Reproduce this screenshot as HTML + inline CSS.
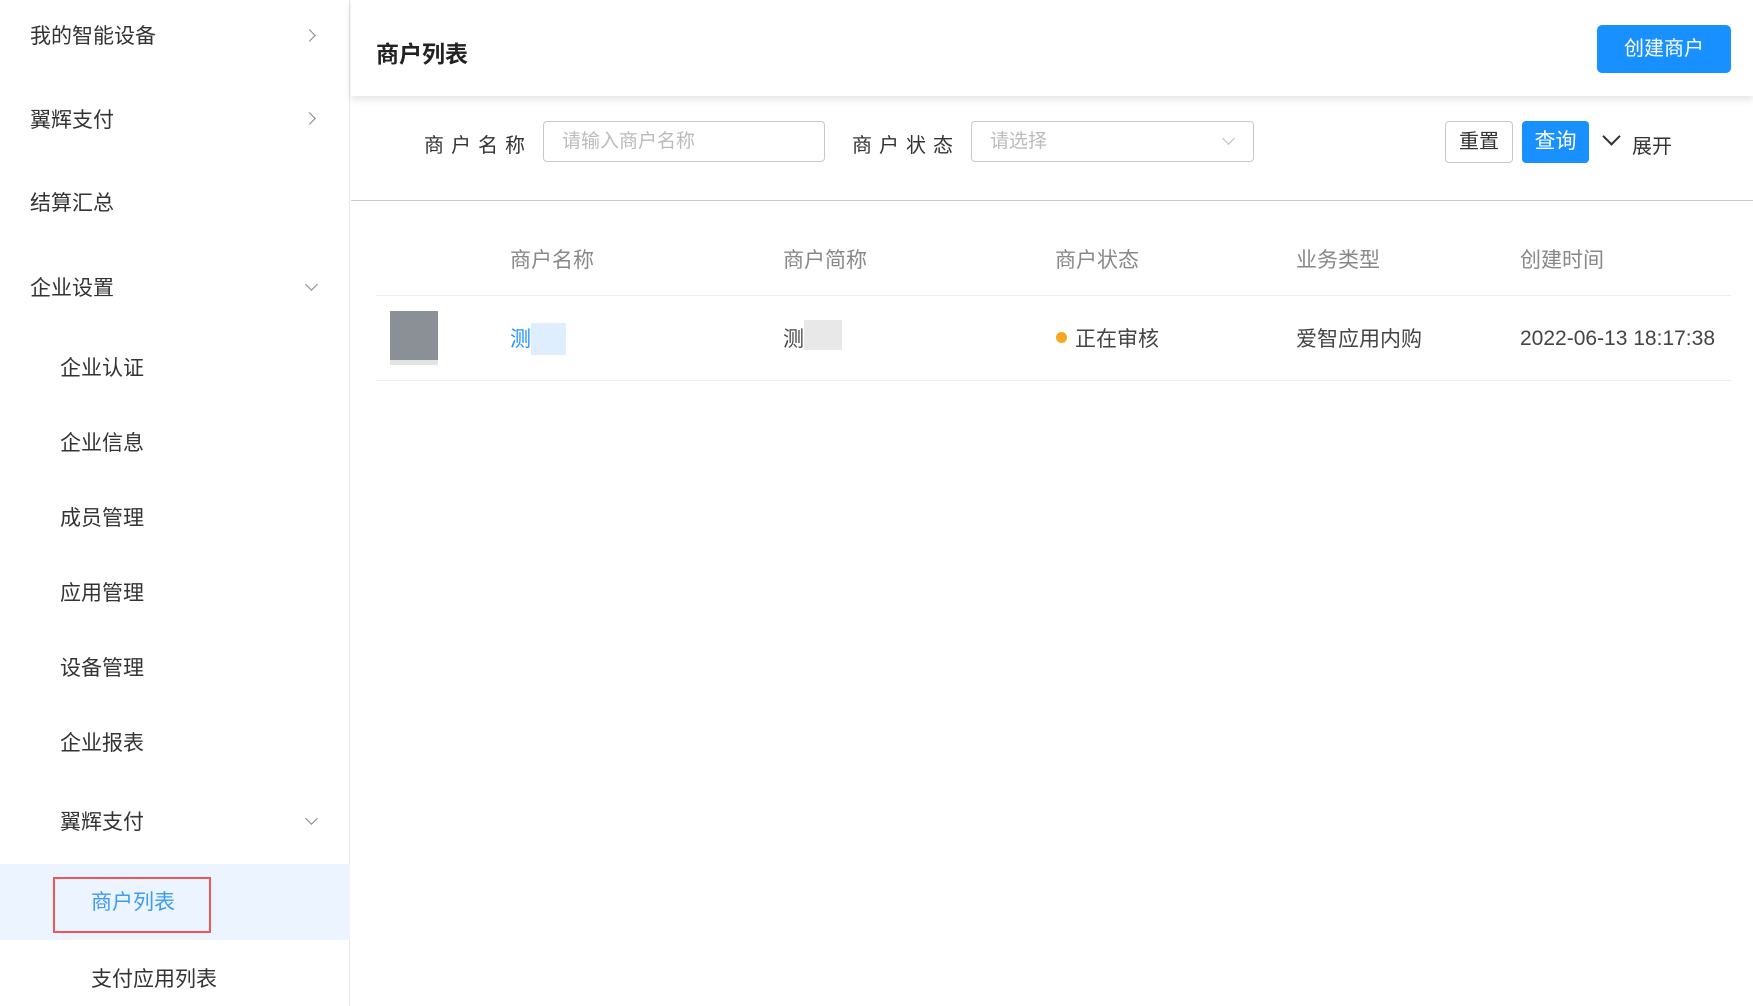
<!DOCTYPE html>
<html><head><meta charset="utf-8"><style>
*{margin:0;padding:0;box-sizing:border-box}
body{width:1753px;height:1006px;overflow:hidden;background:#fff;font-family:"Liberation Sans","Noto Sans CJK SC",sans-serif;color:#333;position:relative}
.a{position:absolute;white-space:nowrap}
.side{position:absolute;left:0;top:0;width:350px;height:1006px;border-right:1px solid #e8e8e8;background:#fff}
.mi{position:absolute;font-size:21px;line-height:24px;color:#333}
.chev{position:absolute;width:9px;height:9px;border-right:1.3px solid #888;border-bottom:1.3px solid #888}
.r{transform:rotate(-45deg)}
.d{transform:rotate(45deg)}
.hdr{position:absolute;left:351px;top:0;width:1402px;height:96px;background:#fff;box-shadow:0 3px 8px rgba(0,0,0,.12)}
.lbl{font-size:20px;letter-spacing:7px;color:#333}
.inp{position:absolute;border:1px solid #c8c8c8;border-radius:4px;height:41px;font-size:19px;color:#bbb;padding-left:18px;line-height:39px}
.th{font-size:21px;color:#888}
.td{font-size:21px;color:#444}
</style></head><body>
<div class="side">
 <div class="mi" style="left:30px;top:25px">我的智能设备</div><div class="chev r" style="left:305px;top:31px"></div>
 <div class="mi" style="left:30px;top:109px">翼辉支付</div><div class="chev r" style="left:305px;top:114px"></div>
 <div class="mi" style="left:30px;top:192px">结算汇总</div>
 <div class="mi" style="left:30px;top:277px">企业设置</div><div class="chev d" style="left:307px;top:280px"></div>
 <div class="mi" style="left:60px;top:357px">企业认证</div>
 <div class="mi" style="left:60px;top:432px">企业信息</div>
 <div class="mi" style="left:60px;top:507px">成员管理</div>
 <div class="mi" style="left:60px;top:582px">应用管理</div>
 <div class="mi" style="left:60px;top:657px">设备管理</div>
 <div class="mi" style="left:60px;top:732px">企业报表</div>
 <div class="mi" style="left:60px;top:811px">翼辉支付</div><div class="chev d" style="left:307px;top:814px"></div>
 <div style="position:absolute;left:0;top:864px;width:350px;height:76px;background:#ebf4ff"></div>
 <div style="position:absolute;left:53px;top:877px;width:158px;height:56px;border:2px solid #f25555"></div>
 <div class="mi" style="left:91px;top:891px;color:#3d9bf5">商户列表</div>
 <div class="mi" style="left:91px;top:968px">支付应用列表</div>
</div>
<div class="hdr">
 <div class="a" style="left:25px;top:35px;font-size:23px;font-weight:bold;color:#222">商户列表</div>
 <div class="a" style="left:1246px;top:25px;width:134px;height:48px;background:#1890ff;border-radius:5px;color:#fff;font-size:20px;line-height:48px;text-align:center">创建商户</div>
</div>
<div class="a lbl" style="left:424px;top:129px">商户名称</div>
<div class="inp" style="left:543px;top:121px;width:282px">请输入商户名称</div>
<div class="a lbl" style="left:852px;top:129px">商户状态</div>
<div class="inp" style="left:971px;top:121px;width:283px">请选择<div class="chev d" style="left:252px;top:12px;border-color:#bbb"></div></div>
<div class="a" style="left:1445px;top:121px;width:68px;height:42px;border:1px solid #c8c8c8;border-radius:4px;font-size:20px;line-height:40px;text-align:center;color:#333">重置</div>
<div class="a" style="left:1522px;top:121px;width:67px;height:42px;background:#1890ff;border-radius:4px;font-size:21px;line-height:42px;text-align:center;color:#fff">查询</div>
<div class="chev d" style="left:1605px;top:130px;width:13px;height:13px;border-color:#333;border-width:2px"></div>
<div class="a" style="left:1632px;top:130px;font-size:20px;color:#333">展开</div>
<div style="position:absolute;left:351px;top:200px;width:1402px;height:1px;background:#c8c8c8"></div>
<div class="a th" style="left:510px;top:244px">商户名称</div>
<div class="a th" style="left:783px;top:244px">商户简称</div>
<div class="a th" style="left:1055px;top:244px">商户状态</div>
<div class="a th" style="left:1296px;top:244px">业务类型</div>
<div class="a th" style="left:1520px;top:244px">创建时间</div>
<div style="position:absolute;left:376px;top:295px;width:1355px;height:1px;background:#eee"></div>
<div style="position:absolute;left:390px;top:311px;width:48px;height:49px;background:#8b9096"></div>
<div style="position:absolute;left:390px;top:360px;width:48px;height:5px;background:#e3e3e3"></div>
<div class="a td" style="left:510px;top:323px;color:#1890ff">测</div>
<div style="position:absolute;left:531px;top:323px;width:35px;height:32px;background:#dfeeff"></div>
<div class="a td" style="left:783px;top:323px">测</div>
<div style="position:absolute;left:804px;top:320px;width:38px;height:30px;background:#e8e8e8"></div>
<div style="position:absolute;left:1056px;top:332px;width:11px;height:11px;border-radius:50%;background:#f5a623"></div>
<div class="a td" style="left:1075px;top:323px">正在审核</div>
<div class="a td" style="left:1296px;top:323px">爱智应用内购</div>
<div class="a td" style="left:1520px;top:327px;color:#444">2022-06-13 18:17:38</div>
<div style="position:absolute;left:376px;top:380px;width:1355px;height:1px;background:#eee"></div>
</body></html>
